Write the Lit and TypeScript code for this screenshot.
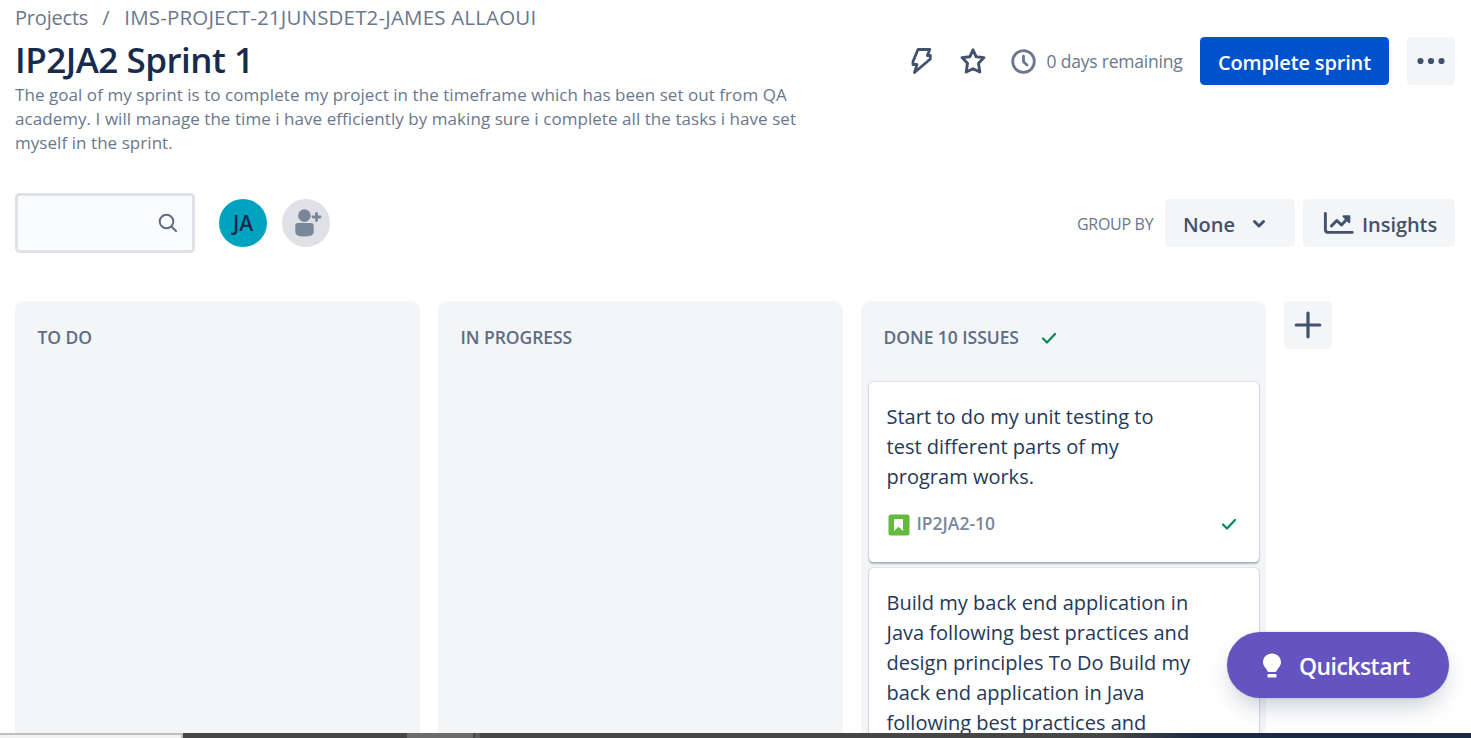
import { LitElement, html, css, svg } from "lit";
import { customElement, property } from "lit/decorators.js";

const check = svg`<path d="M2 7.5 L6 11.5 L14 3" fill="none" stroke="#00875a" stroke-width="2.2" stroke-linecap="round" stroke-linejoin="round"/>`;

@customElement("issue-card")
class IssueCard extends LitElement {
  @property({ attribute: false }) lines: string[] = [];
  @property() key = "";

  static styles = css`
    :host { display: block; }
    .card {
      box-sizing: border-box; height: 180px; padding: 20px 18px 0 17.5px; background: #fff;
      border-radius: 4.5px;
      box-shadow: 0 1.5px 2px rgba(9, 30, 66, 0.28), 0 0 1.5px rgba(9, 30, 66, 0.3);
    }
    .tall { height: 300px; }
    .summary { font-size: 20px; line-height: 30px; color: #253858; white-space: nowrap; letter-spacing: 0.01px; }
    .footer { display: flex; align-items: center; height: 36px; margin-top: 15px; }
    .type { margin-left: 1.5px; width: 22px; height: 22px; }
    .key { margin: -4px 0 0 6.5px; font-size: 17.5px; font-weight: 600; color: #7a869a; letter-spacing: 0; }
    .done { margin: -2px 4px 0 auto; width: 16px; height: 14px; }
  `;

  render() {
    return html`<div class="card ${this.key ? "" : "tall"}">
      ${this.lines.map((l) => html`<div class="summary">${l}</div>`)}
      ${this.key
        ? html`<div class="footer">
            <svg class="type" viewBox="0 0 22 22"><rect x="0.5" y="0.5" width="21" height="21" rx="2.5" fill="#63ba3c"/><path d="M6 5.8Q6 5 6.8 5H14.2Q15 5 15 5.8V17L10.5 12.8L6 17Z" fill="#fff"/></svg>
            <span class="key">${this.key}</span>
            <svg class="done" viewBox="0 0 16 14">${check}</svg>
          </div>`
        : ""}
    </div>`;
  }
}

@customElement("app-root")
class AppRoot extends LitElement {
  static styles = css`
    :host {
      display: flex; flex-direction: column; position: relative; height: 738px; overflow: hidden;
      background: #fff; color: #42526e; font-family: "Open Sans", "Noto Sans", sans-serif;
    }
    svg { display: block; flex: none; }
    .page { flex: 1; min-height: 0; overflow: hidden; padding: 0 16px 0 15px; }
    .crumbs { height: 36px; line-height: 35px; font-size: 20px; color: #6b778c; white-space: pre; display: flex; letter-spacing: -0.2px; }
    .crumbs .sep { margin: 0 15px 0 14px; }
    .project { letter-spacing: 0.17px; font-size: 20.5px; }
    .header { display: flex; justify-content: space-between; height: 119px; }
    h1 { margin: 0; font-size: 35px; line-height: 47px; font-weight: 600; color: #172b4d; letter-spacing: -0.5px; white-space: nowrap; }
    .goal { font-size: 17px; line-height: 24px; color: #6b778c; white-space: nowrap; letter-spacing: 0.055px; }
    .actions { display: flex; align-items: center; height: 48px; margin-top: 1px; }
    .clock { margin-left: 24px; }
    .star { margin-left: 25px; }
    .days { width: 136px; margin: 0 17.5px 0 11px; font-size: 17.5px; color: #6b778c; white-space: nowrap; letter-spacing: -0.2px; }
    .button {
      box-sizing: border-box; height: 48px; border-radius: 4.5px; background: #f4f5f7;
      display: flex; align-items: center; font-size: 20px; font-weight: 600; white-space: nowrap;
    }
    .primary { width: 189px; padding-top: 2px; background: #0052cc; color: #fff; justify-content: center; letter-spacing: -0.15px; }
    .square { width: 48px; justify-content: center; }
    .more { margin-left: 18px; }
    .toolbar { display: flex; align-items: center; height: 60px; margin-top: 38px; }
    .search {
      box-sizing: border-box; width: 180px; height: 60px; border: 3px solid #dfe1e6; border-radius: 4.5px;
      background: #fafbfc; display: flex; align-items: center; justify-content: flex-end; padding-right: 14px;
    }
    .avatar {
      width: 48px; height: 48px; border-radius: 50%; background: #00a3bf; color: #172b4d; margin-left: 24px;
      display: flex; align-items: center; justify-content: center; font-size: 21px; font-weight: 600;
    }
    .add { margin-left: 15px; background: #dfe1e6; }
    .group { width: 77px; margin: 2px 11px 0 auto; font-size: 16px; color: #6b778c; white-space: nowrap; letter-spacing: -0.3px; }
    .select { width: 130px; padding-left: 18px; }
    .label { padding-top: 2px; letter-spacing: -0.05px; }
    .chevron { margin: 1px 0 0 17px; }
    .insights { width: 152px; margin-left: 8px; padding-left: 20px; }
    .chart { margin-right: 8px; }
    .board { display: flex; align-items: flex-start; gap: 18px; margin-top: 48px; }
    .column { box-sizing: border-box; width: 405px; height: 500px; padding: 0 7px 0 8px; background: #f4f5f7; border-radius: 9px; }
    .heading { height: 81px; padding-left: 14.5px; display: flex; align-items: center; font-size: 17.5px; font-weight: 600; color: #5e6c84; white-space: nowrap; letter-spacing: -0.05px; }
    .head-text { margin-top: -9px; }
    .head-check { margin: -8px 0 0 22.5px; }
    .cards { display: flex; flex-direction: column; gap: 6px; }
    .quickstart {
      position: absolute; left: 1227px; top: 632px; width: 222px; height: 66px; border-radius: 33px; background: #6554c0;
      box-shadow: 0 12px 24px -6px rgba(9, 30, 66, 0.25), 0 0 2px rgba(9, 30, 66, 0.2);
      color: #fff; display: flex; align-items: center; font-size: 23px; font-weight: 600; white-space: nowrap;
    }
    .quick-label { padding-top: 2px; letter-spacing: -0.55px; }
    .bulb { margin: 0 18px 0 36px; }
    .taskbar { flex: none; display: flex; height: 5px; background: linear-gradient(90deg, #464646 0 1110px, #1b2a44 1200px); }
    .task-search { box-sizing: border-box; width: 183px; border-top: 2px solid #bfbfbf; border-right: 2px solid #bfbfbf; background: #f2f2f2; margin-right: 224px; }
    .task-active { width: 66px; background: #6b6b6b; margin-right: 2px; }
    .task-edge { width: 5px; background: #5c5c5c; }
  `;

  render() {
    return html`
      <div class="page">
        <div class="crumbs"><span>Projects</span><span class="sep">/</span><span class="project">IMS-PROJECT-21JUNSDET2-JAMES ALLAOUI</span></div>
        <div class="header">
          <div>
            <h1>IP2JA2 Sprint 1</h1>
            <div class="goal">The goal of my sprint is to complete my project in the timeframe which has been set out from QA<br>academy. I will manage the time i have efficiently by making sure i complete all the tasks i have set<br>myself in the sprint.</div>
          </div>
          <div class="actions">
            <svg width="24" height="28" viewBox="0 0 24 28" fill="none" stroke="#42526e" stroke-width="2.8" stroke-linejoin="round"><path d="M8 2.500H19.800L17.300 8.500H20.300V12L4.500 25.500L7 17.500H3V14.500Z"/></svg>
            <svg class="star" width="28" height="28" viewBox="0 0 28 28" fill="none" stroke="#42526e" stroke-width="2.9" stroke-linejoin="round"><path d="M14 2.8L17.2 9.8L25 10.6L19.5 16.2L20.8 25L14 21.7L7.2 25L8.5 16.2L3 10.6L10.8 9.8Z"/></svg>
            <svg class="clock" width="25" height="25" viewBox="0 0 25 25" fill="none" stroke="#6b778c" stroke-width="2.8" stroke-linecap="round" stroke-linejoin="round"><circle cx="12.5" cy="12.5" r="10.8"/><path d="M12.5 7.2V12.8L16 16"/></svg>
            <span class="days">0 days remaining</span>
            <div class="button primary">Complete sprint</div>
            <div class="button square more"><svg width="28" height="8" viewBox="0 0 28 8" fill="#42526e"><circle cx="3.5" cy="4" r="3.1"/><circle cx="14" cy="4" r="3.1"/><circle cx="24.5" cy="4" r="3.1"/></svg></div>
          </div>
        </div>
        <div class="toolbar">
          <div class="search"><svg width="20" height="20" viewBox="0 0 20 20" fill="none" stroke="#5e6c84" stroke-width="2" stroke-linecap="round"><circle cx="8.5" cy="8.5" r="6.8"/><path d="M13.5 13.5L18 18"/></svg></div>
          <div class="avatar">JA</div>
          <div class="avatar add"><svg width="48" height="48" viewBox="0 0 48 48" fill="#7a869a"><circle cx="22.4" cy="16.6" r="6.3"/><path d="M16 24H29Q31.7 24 31.7 26.7V33Q31.7 37.5 22.4 37.5Q13.3 37.5 13.3 33V26.7Q13.3 24 16 24Z"/><path d="M34.5 14.5V21.5M31 18H38" stroke="#7a869a" stroke-width="2.8" stroke-linecap="round"/></svg></div>
          <span class="group">GROUP BY</span>
          <div class="button select"><span class="label">None</span><svg class="chevron" width="14" height="10" viewBox="0 0 14 10" fill="none" stroke="#42526e" stroke-width="3" stroke-linecap="round" stroke-linejoin="round"><path d="M2.5 2.5L7 7L11.5 2.5"/></svg></div>
          <div class="button insights"><svg class="chart" width="31" height="24" viewBox="0 0 31 24" fill="none" stroke="#42526e" stroke-width="2.9" stroke-linecap="round" stroke-linejoin="round"><path d="M2.4 2.4V18.4Q2.4 21.4 5.4 21.4H29.2"/><path d="M8.4 15L13.8 9.5L18.5 14L25 7"/><path d="M20.5 5.3H26.3V11.2Z" fill="#42526e" stroke-width="2"/></svg><span class="label">Insights</span></div>
        </div>
        <div class="board">
          <div class="column"><div class="heading"><span class="head-text">TO DO</span></div></div>
          <div class="column"><div class="heading"><span class="head-text">IN PROGRESS</span></div></div>
          <div class="column">
            <div class="heading"><span class="head-text">DONE 10 ISSUES</span><svg class="head-check" width="16" height="14" viewBox="0 0 16 14">${check}</svg></div>
            <div class="cards">
              <issue-card key="IP2JA2-10" .lines=${["Start to do my unit testing to", "test different parts of my", "program works."]}></issue-card>
              <issue-card .lines=${["Build my back end application in", "Java following best practices and", "design principles To Do Build my", "back end application in Java", "following best practices and"]}></issue-card>
            </div>
          </div>
          <div class="button square"><svg width="28" height="28" viewBox="0 0 28 28" stroke="#42526e" stroke-width="3.2" stroke-linecap="round"><path d="M14 2.2V25.8M2.2 14H25.8"/></svg></div>
        </div>
      </div>
      <div class="taskbar"><div class="task-search"></div><div class="task-active"></div><div class="task-edge"></div></div>
      <div class="quickstart"><svg class="bulb" width="18" height="25" viewBox="0 0 18 25" fill="#fff"><path d="M9 0.5C4 .5 0 4.3 0 9.2C0 13 3 14.8 4 17.3Q4.6 19 5.5 19H12.5Q13.4 19 14 17.3C15 14.8 18 13 18 9.2C18 4.3 14 .5 9 .5Z"/><rect x="4.5" y="21" width="9" height="3.5" rx="1"/></svg><span class="quick-label">Quickstart</span></div>
    `;
  }
}
